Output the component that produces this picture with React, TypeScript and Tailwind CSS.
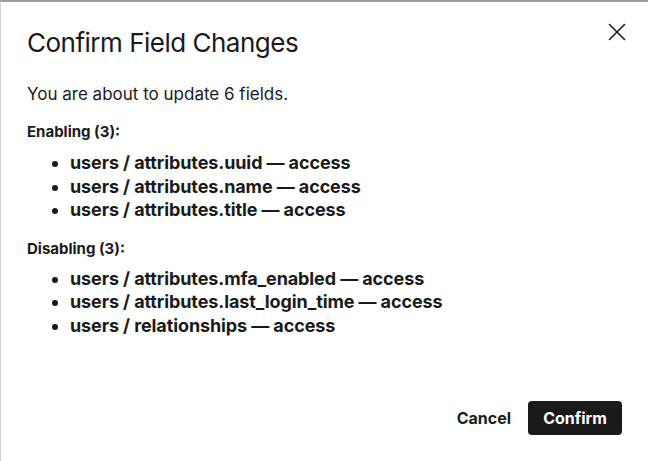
import React from 'react';
import { X } from 'lucide-react';

const enabling = ['users / attributes.uuid — access', 'users / attributes.name — access', 'users / attributes.title — access'];
const disabling = [
  'users / attributes.mfa_enabled — access',
  'users / attributes.last_login_time — access',
  'users / relationships — access',
];

function FieldList({ items, className }: { items: string[]; className: string }) {
  return (
    <ul className={`list-disc pl-[43px] ${className}`}>
      {items.map((item) => (
        <li key={item} className="text-[18px] leading-[23.5px] font-bold tracking-[-0.1px] text-[#1a1a1a] marker:text-[#1a1a1a]">
          {item}
        </li>
      ))}
    </ul>
  );
}

export default function App() {
  return (
    <div
      className="w-[648px] h-[461px] bg-white border-t-2 border-t-[#9a9a9a] border-l border-l-[#d4d4d4] relative text-[#1a1a1a]"
      style={{ fontFamily: 'Inter, "Noto Sans", sans-serif' }}
    >
      <button className="absolute right-[16px] top-[15px] text-[#1a1a1a]" aria-label="Close">
        <X className="w-[30px] h-[30px]" strokeWidth={1.3} />
      </button>
      <div className="flex flex-col h-full pl-[26px] pr-[26px] pt-[25px] pb-[26px]">
        <h1 className="text-[26px] leading-[32px] font-normal tracking-[-0.5px]">Confirm Field Changes</h1>
        <p className="mt-[23px] text-[17px] leading-[24px]">You are about to update 6 fields.</p>
        <h2 className="mt-[16px] text-[15px] leading-[20px] font-bold">Enabling (3):</h2>
        <FieldList items={enabling} className="mt-[9px]" />
        <h2 className="mt-[17px] text-[15px] leading-[20px] font-bold">Disabling (3):</h2>
        <FieldList items={disabling} className="mt-[8px]" />
        <div className="mt-auto flex items-center justify-end gap-[17px]">
          <button className="text-[16px] font-bold">Cancel</button>
          <button className="h-[34px] w-[94px] rounded-[4px] bg-[#1a1a1a] text-white text-[16px] font-bold">
            Confirm
          </button>
        </div>
      </div>
    </div>
  );
}
